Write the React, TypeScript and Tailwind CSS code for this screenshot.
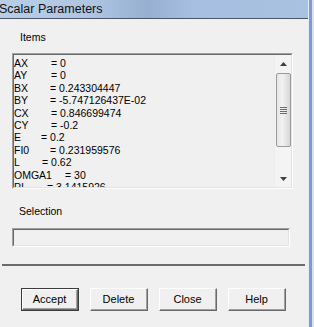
import React from "react";

const rows = [
  { name: "AX", w: "w-[37px]", value: "= 0" },
  { name: "AY", w: "w-[37px]", value: "= 0" },
  { name: "BX", w: "w-[36px]", value: "= 0.243304447" },
  { name: "BY", w: "w-[36px]", value: "= -5.747126437E-02" },
  { name: "CX", w: "w-[37px]", value: "= 0.846699474" },
  { name: "CY", w: "w-[37px]", value: "= -0.2" },
  { name: "E", w: "w-[27px]", value: "= 0.2" },
  { name: "FI0", w: "w-[36px]", value: "= 0.231959576" },
  { name: "L", w: "w-[28px]", value: "= 0.62" },
  { name: "OMGA1", w: "w-[51px]", value: "= 30" },
  { name: "PI", w: "w-[33px]", value: "= 3.1415926" },
];

const Button = ({ label, primary }: { label: string; primary?: boolean }) => (
  <div
    className={
      primary
        ? "w-[58px] h-[23px] border border-[#3c3c3c]"
        : "w-[58px] h-[23px]"
    }
  >
    <div className="h-full border-t border-l border-t-[#ffffff] border-l-[#ffffff] border-b border-r border-b-[#696969] border-r-[#696969]">
      <div className="h-full flex items-center justify-center border-b border-r border-b-[#a0a0a0] border-r-[#a0a0a0] bg-[#f0f0f0] text-[11px] text-black">
        {label}
      </div>
    </div>
  </div>
);

export default function App() {
  return (
    <div
      className="w-[314px] h-[327px] flex overflow-hidden bg-[#f0f0f0]"
      style={{ fontFamily: '"Liberation Sans", Arial, sans-serif' }}
    >
      <div className="w-[308px] flex flex-col">
        {/* Title bar */}
        <div className="h-[18px] flex items-center bg-[linear-gradient(90deg,#b9cde6_0%,#aec5e3_30%,#97afd0_48%,#a6bedf_62%,#aac2e2_100%)]">
          <span className="text-[12.5px] leading-none text-[#111] -ml-[1px]">Scalar Parameters</span>
        </div>
        <div className="h-px bg-[#4a5666]" />

        {/* Items */}
        <div className="pt-[12px] pl-[20px] text-[10.5px] leading-[13px] text-black">Items</div>
        <div className="mt-[9px] ml-[12px] w-[281px] h-[136px] border-t border-l border-t-[#a0a0a0] border-l-[#a0a0a0] border-b border-r border-b-[#ffffff] border-r-[#ffffff]">
          <div className="h-full flex border-t border-l border-t-[#696969] border-l-[#696969] border-b border-r border-b-[#e3e3e3] border-r-[#e3e3e3] bg-[#f0f0f0]">
            <div className="flex-1 overflow-hidden pt-[2px] text-[10.5px] leading-[12.4px] text-black">
              {rows.map((r) => (
                <div key={r.name} className="flex whitespace-pre">
                  <span className={r.w + " shrink-0"}>{r.name}</span>
                  <span>{r.value}</span>
                </div>
              ))}
            </div>
            {/* Scrollbar */}
            <div className="w-[17px] h-full flex flex-col items-center bg-[#f4f4f4] border-l border-l-[#ececec]">
              <div className="h-[17px] w-full flex items-center justify-center">
                <svg width="7" height="4" viewBox="0 0 7 4">
                  <path d="M3.5 0 L7 4 L0 4 Z" fill="#404040" />
                </svg>
              </div>
              <div className="mt-[1px] w-[15px] h-[74px] rounded-[2px] border border-[#9a9a9a] bg-[linear-gradient(90deg,#e6e6e6,#f2f2f2_40%,#d6d6d6)] flex flex-col items-center justify-center gap-[1px]">
                <div className="w-[7px] h-px bg-[#6e6e6e]" />
                <div className="w-[7px] h-px bg-[#6e6e6e]" />
                <div className="w-[7px] h-px bg-[#6e6e6e]" />
                <div className="w-[7px] h-px bg-[#6e6e6e]" />
              </div>
              <div className="flex-1" />
              <div className="h-[17px] w-full flex items-center justify-center">
                <svg width="7" height="4" viewBox="0 0 7 4">
                  <path d="M0 0 L7 0 L3.5 4 Z" fill="#404040" />
                </svg>
              </div>
            </div>
          </div>
        </div>

        {/* Selection */}
        <div className="mt-[16px] pl-[19px] text-[10.5px] leading-[13px] text-black">Selection</div>
        <div className="mt-[10px] ml-[12px] w-[278px] h-[19px] border-t border-l border-t-[#a0a0a0] border-l-[#a0a0a0] border-b border-r border-b-[#ffffff] border-r-[#ffffff]">
          <div className="h-full border-t border-l border-t-[#696969] border-l-[#696969] border-b border-r border-b-[#e3e3e3] border-r-[#e3e3e3] bg-[#f0f0f0]" />
        </div>

        {/* Separator */}
        <div className="mt-[17px] ml-[2px] w-[303px] h-[2px] bg-[#6b6b6b]" />

        {/* Buttons */}
        <div className="mt-[22px] ml-[21px] flex gap-[11px]">
          <Button label="Accept" primary />
          <Button label="Delete" />
          <Button label="Close" />
          <Button label="Help" />
        </div>
      </div>

      {/* Window frame */}
      <div className="flex-1 flex">
        <div className="w-px bg-[#e4ebf4]" />
        <div className="w-[3px] bg-[#7b9ccc]" />
        <div className="flex-1 bg-[#d9e1ea]" />
      </div>
    </div>
  );
}
